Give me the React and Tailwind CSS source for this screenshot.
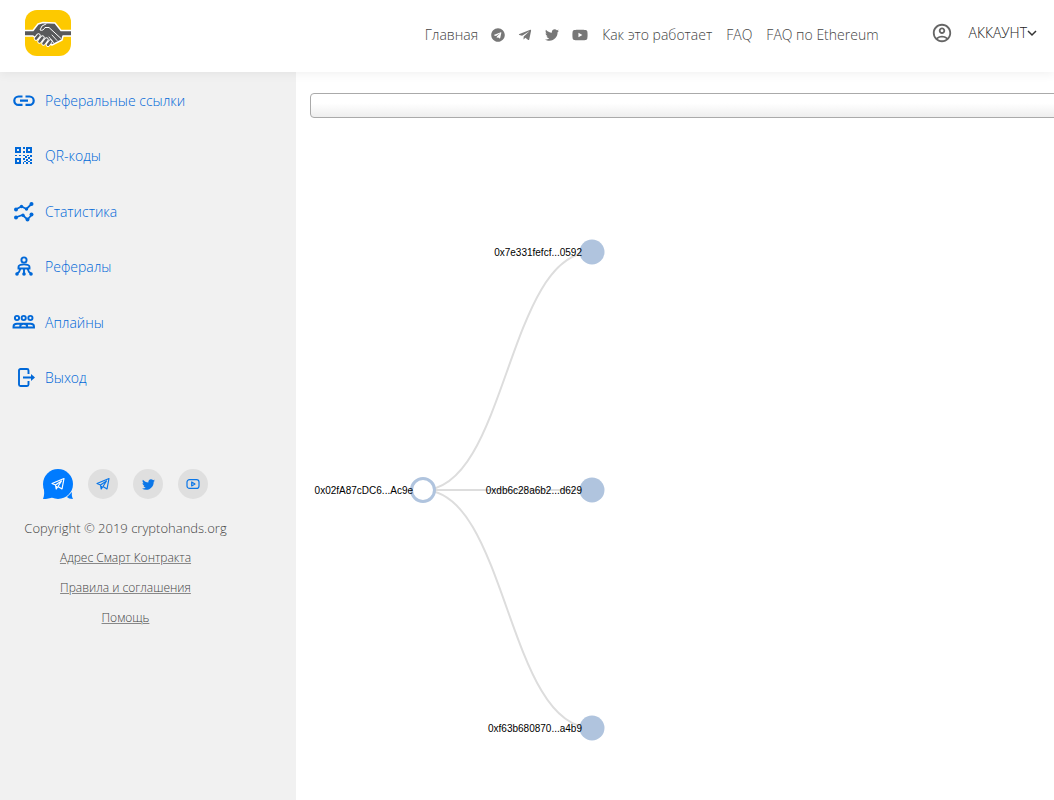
import { FaTelegram, FaTelegramPlane, FaTwitter, FaYoutube } from "react-icons/fa";
import { MdOutlineAccountCircle } from "react-icons/md";

function Logo() {
  return (
    <svg viewBox="0 0 46 46" className="size-[46px]" role="img" aria-label="CryptoHands">
      <rect width="46" height="46" rx="12" fill="#fdc900" />
      <g strokeLinecap="round" strokeLinejoin="round">
        <path
          d="M-2 20.500H8L13 14 18 12.500 30 13 36 20.500H48V26H38L37 30 27 35 12 29 8 26H-2z"
          fill="#58595b"
          stroke="#fff"
          strokeWidth="1.500"
        />
        <path
          d="M13.500 25.500l-2.500 3M17.500 27.500l-3 4M21.500 29.500l-3 4M25.500 31.500l-2.500 3.200"
          stroke="#fff"
          strokeWidth="4.400"
        />
        <path
          d="M13.500 25.500l-2.500 3M17.500 27.500l-3 4M21.500 29.500l-3 4M25.500 31.500l-2.500 3.200"
          stroke="#58595b"
          strokeWidth="2.600"
        />
        <path d="M21 14l-4 2-2 4c2.500 1 4-.5 5-2.500h4l12 11" fill="none" stroke="#fff" strokeWidth="1" />
        <path d="M27 25l5 5.500M24 27l4.500 5.500" fill="none" stroke="#fff" strokeWidth="0.900" />
      </g>
    </svg>
  );
}

function LinkIcon() {
  return (
    <svg viewBox="0 0 24 24" className="size-6" fill="none" stroke="currentColor" strokeWidth="2.200">
      <path d="M10.500 7.500H6.500a4.200 4.200 0 0 0 0 8.400h4M13.500 7.500h4a4.200 4.200 0 0 1 0 8.400h-4M8 11.700h8" />
    </svg>
  );
}

function QrIcon() {
  return (
    <svg viewBox="0 0 24 24" className="size-6" fill="currentColor">
      <path
        fillRule="evenodd"
        d="M3 3h6v6H3zM5 5v2h2V5zM14 3h6v6h-6zM16 5v2h2V5zM3 14h6v6H3zM5 16v2h2v-2z"
      />
      <path d="M11 3h2v2h-2zM11 7h2v2h-2zM3 11h2v1H3zM7 11h2v1H7zM11 11h2v1h-2zM15 11h2v1h-2zM18 11h2v2h-2zM13 12h2v2h-2zM16 13h2v2h-2zM11 14h2v2h-2zM14 15h2v2h-2zM18 15h2v2h-2zM12 17h2v1h-2zM16 17h2v1h-2zM14 18h2v2h-2zM11 18h1v2h-1zM18 18h2v2h-2z" />
    </svg>
  );
}

function StatsIcon() {
  return (
    <svg viewBox="0 0 24 24" className="size-6" fill="currentColor">
      <path
        d="M3.500 9.500L9.500 6.500l5 2.500 5.500-5.500M3.500 17.500l7-2.500 5 4.500 4.500-5"
        fill="none"
        stroke="currentColor"
        strokeWidth="1.800"
      />
      <circle cx="4" cy="9.500" r="2" />
      <circle cx="9.500" cy="6.500" r="1.700" />
      <circle cx="14.500" cy="9" r="1.700" />
      <circle cx="19.500" cy="4" r="2" />
      <circle cx="4" cy="17.500" r="2" />
      <circle cx="11" cy="15.300" r="1.700" />
      <circle cx="15.500" cy="19.500" r="2" />
      <circle cx="19.500" cy="14.500" r="2" />
    </svg>
  );
}

function ReferralsIcon() {
  return (
    <svg viewBox="0 0 24 24" className="size-6" fill="none" stroke="currentColor" strokeWidth="1.900">
      <circle cx="12" cy="5" r="2.600" />
      <path d="M6.500 13.500v-1.500c0-1.800 2.500-2.600 5.500-2.600s5.500.8 5.500 2.600v1.500zM12 13.500v5M8.500 13.500l-1.500 3.500-2 1.500M15.500 13.500l1.500 3.500 2 1.500" />
      <g fill="currentColor" stroke="none">
        <circle cx="5" cy="19" r="1.800" />
        <circle cx="12" cy="19" r="1.800" />
        <circle cx="19" cy="19" r="1.800" />
      </g>
    </svg>
  );
}

function UplinesIcon() {
  return (
    <svg viewBox="0 0 24 24" className="size-6" fill="none" stroke="currentColor" strokeWidth="1.900">
      <circle cx="5" cy="7" r="2.100" />
      <circle cx="11.700" cy="7" r="2.100" />
      <circle cx="18.400" cy="7" r="2.100" />
      <path d="M1.500 16.500V15.500c0-2 1.500-2.700 3.500-2.700h13.500c2 0 3.500.7 3.500 2.700v1zM8.200 16.500v-1c0-1.800 1-2.700 3.500-2.700s3.500.9 3.500 2.700v1" />
    </svg>
  );
}

function ExitIcon() {
  return (
    <svg viewBox="0 0 24 24" className="size-6" fill="none" stroke="currentColor" strokeWidth="1.900">
      <path d="M16.500 8V4.500A1.500 1.500 0 0 0 15 3H8.500A1.500 1.500 0 0 0 7 4.500v14A1.500 1.500 0 0 0 8.500 20H15a1.500 1.500 0 0 0 1.500-1.500V15M11 11.500h9" />
      <path d="M19 8l4 3.500-4 3.500z" fill="currentColor" stroke="none" />
    </svg>
  );
}

function PlaneIcon() {
  return (
    <svg viewBox="0 0 14 14" className="size-[14px]" fill="none" stroke="currentColor" strokeWidth="1.200" strokeLinejoin="round">
      <path d="M1 6.500L13 1.500l-2 10.500-4-2.500L5.200 12 4.500 8zM4.500 8L10.500 4 7 9.500M5.200 12l.3-3" />
    </svg>
  );
}

function VideoIcon() {
  return (
    <svg viewBox="0 0 14 14" className="size-[14px]" fill="none" stroke="currentColor" strokeWidth="1.200" strokeLinejoin="round">
      <rect x="1" y="2.600" width="12" height="8.800" rx="2.500" />
      <path d="M5.700 5v4l3.300-2z" />
    </svg>
  );
}

const menu = [
  { label: "Реферальные ссылки", Icon: LinkIcon },
  { label: "QR-коды", Icon: QrIcon },
  { label: "Статистика", Icon: StatsIcon },
  { label: "Рефералы", Icon: ReferralsIcon },
  { label: "Аплайны", Icon: UplinesIcon },
  { label: "Выход", Icon: ExitIcon },
];

const footerLinks = ["Адрес Смарт Контракта", "Правила и соглашения", "Помощь"];

const leaves = [
  { y: 252, label: "0x7e331fefcf...0592" },
  { y: 490, label: "0xdb6c28a6b2...d629" },
  { y: 728, label: "0xf63b680870...a4b9" },
];

function Header() {
  return (
    <header className="relative z-10 flex h-[72px] items-start bg-white pl-[25px] pr-[17px] shadow-[0_2px_10px_rgba(0,0,0,0.06)]">
      <a href="#" className="mt-[10px]">
        <Logo />
      </a>
      <nav className="ml-auto mt-[25px] flex h-5 items-center text-sm text-[#444]">
        <a href="#">Главная</a>
        <a href="#" aria-label="Telegram" className="ml-[13px] text-[#777]"><FaTelegram className="size-[14px]" /></a>
        <a href="#" aria-label="Telegram канал" className="ml-[13px] text-[#777]"><FaTelegramPlane className="size-[14px]" /></a>
        <a href="#" aria-label="Twitter" className="ml-[13px] text-[#777]"><FaTwitter className="size-[14px]" /></a>
        <a href="#" aria-label="YouTube" className="ml-[13px] text-[#777]"><FaYoutube className="size-4" /></a>
        <a href="#" className="ml-[14px]">Как это работает</a>
        <a href="#" className="ml-[14px]">FAQ</a>
        <a href="#" className="ml-[14px]">FAQ по Ethereum</a>
      </nav>
      <button className="ml-[52px] mt-[22px] flex items-center text-sm text-[#222]">
        <MdOutlineAccountCircle className="mr-4 size-[22px] text-[#666]" />
        АККАУНТ
        <svg viewBox="0 0 10 10" className="size-[10px]" fill="none" stroke="#333" strokeWidth="1.500">
          <path d="M1 3l4 4 4-4" />
        </svg>
      </button>
    </header>
  );
}

function Sidebar() {
  return (
    <aside className="w-[296px] shrink-0 bg-[#f1f1f1] pt-[19px]">
      <ul className="flex h-[297px] flex-col justify-between">
        {menu.map(({ label, Icon }) => (
          <li key={label}>
            <a href="#" className="flex h-5 items-center gap-[9px] pl-3 text-sm text-[#0068d8]">
              <Icon />
              {label}
            </a>
          </li>
        ))}
      </ul>

      <div className="mt-[81px] flex w-[251px] flex-col items-center text-[#444]">
        <div className="flex gap-[15px] text-[#0a76e8]">
          <a href="#" aria-label="Telegram чат" className="relative flex size-[30px] items-center justify-center text-white">
            <svg viewBox="0 0 30 30" className="absolute inset-0 size-[30px]" fill="#007bff">
              <circle cx="15" cy="15" r="15" />
              <path d="M0.500 18c1 5 1 8-.5 12 4 0 7-.500 10-2zM29 23c-.500 3 0 5 1 7-3 0-5-1-6-2z" />
            </svg>
            <span className="relative"><PlaneIcon /></span>
          </a>
          <a href="#" aria-label="Telegram" className="flex size-[30px] items-center justify-center rounded-full bg-[#dfdfdf]"><PlaneIcon /></a>
          <a href="#" aria-label="Twitter" className="flex size-[30px] items-center justify-center rounded-full bg-[#dfdfdf]"><FaTwitter className="size-[13px]" /></a>
          <a href="#" aria-label="YouTube" className="flex size-[30px] items-center justify-center rounded-full bg-[#dfdfdf]"><VideoIcon /></a>
        </div>
        <p className="mt-[19px] text-[13px] leading-5">Copyright © 2019 cryptohands.org</p>
        <div className="mt-[10px] flex flex-col items-center gap-[10px] text-xs leading-5">
          {footerLinks.map((label) => (
            <a key={label} href="#" className="underline decoration-[#888]">{label}</a>
          ))}
        </div>
      </div>
    </aside>
  );
}

function ReferralTree() {
  return (
    <svg width="744" height="682" viewBox="310 118 744 682" className="block font-['Liberation_Sans',Arial,sans-serif] text-[10px] font-normal">
      <g fill="none" stroke="#ddd" strokeWidth="2">
        {leaves.map(({ y }) => (
          <path key={y} d={`M423 490C507 490 507 ${y} 592 ${y}`} />
        ))}
      </g>
      <circle cx="423" cy="490" r="11.500" fill="#fff" stroke="#b0c4de" strokeWidth="3" />
      <text x="413" y="494" textAnchor="end">0x02fA87cDC6...Ac9e</text>
      {leaves.map(({ y, label }) => (
        <g key={y}>
          <circle cx="592" cy={y} r="12.500" fill="#b0c4de" />
          <text x="582" y={y + 4} textAnchor="end">{label}</text>
        </g>
      ))}
    </svg>
  );
}

export default function App() {
  return (
    <div className="flex min-h-screen flex-col bg-white font-['Open_Sans','Noto_Sans',sans-serif] font-light">
      <Header />
      <div className="flex flex-1">
        <Sidebar />
        <main className="min-w-0 flex-1 overflow-hidden pl-[14px] pt-[21px]">
          <div className="-mr-2">
            <input
              type="text"
              aria-label="Поиск"
              className="block h-[25px] w-full rounded-[4px] border border-[#aaa] bg-linear-to-b from-white from-40% to-[#eee] px-2 text-sm"
            />
          </div>
          <ReferralTree />
        </main>
      </div>
    </div>
  );
}
